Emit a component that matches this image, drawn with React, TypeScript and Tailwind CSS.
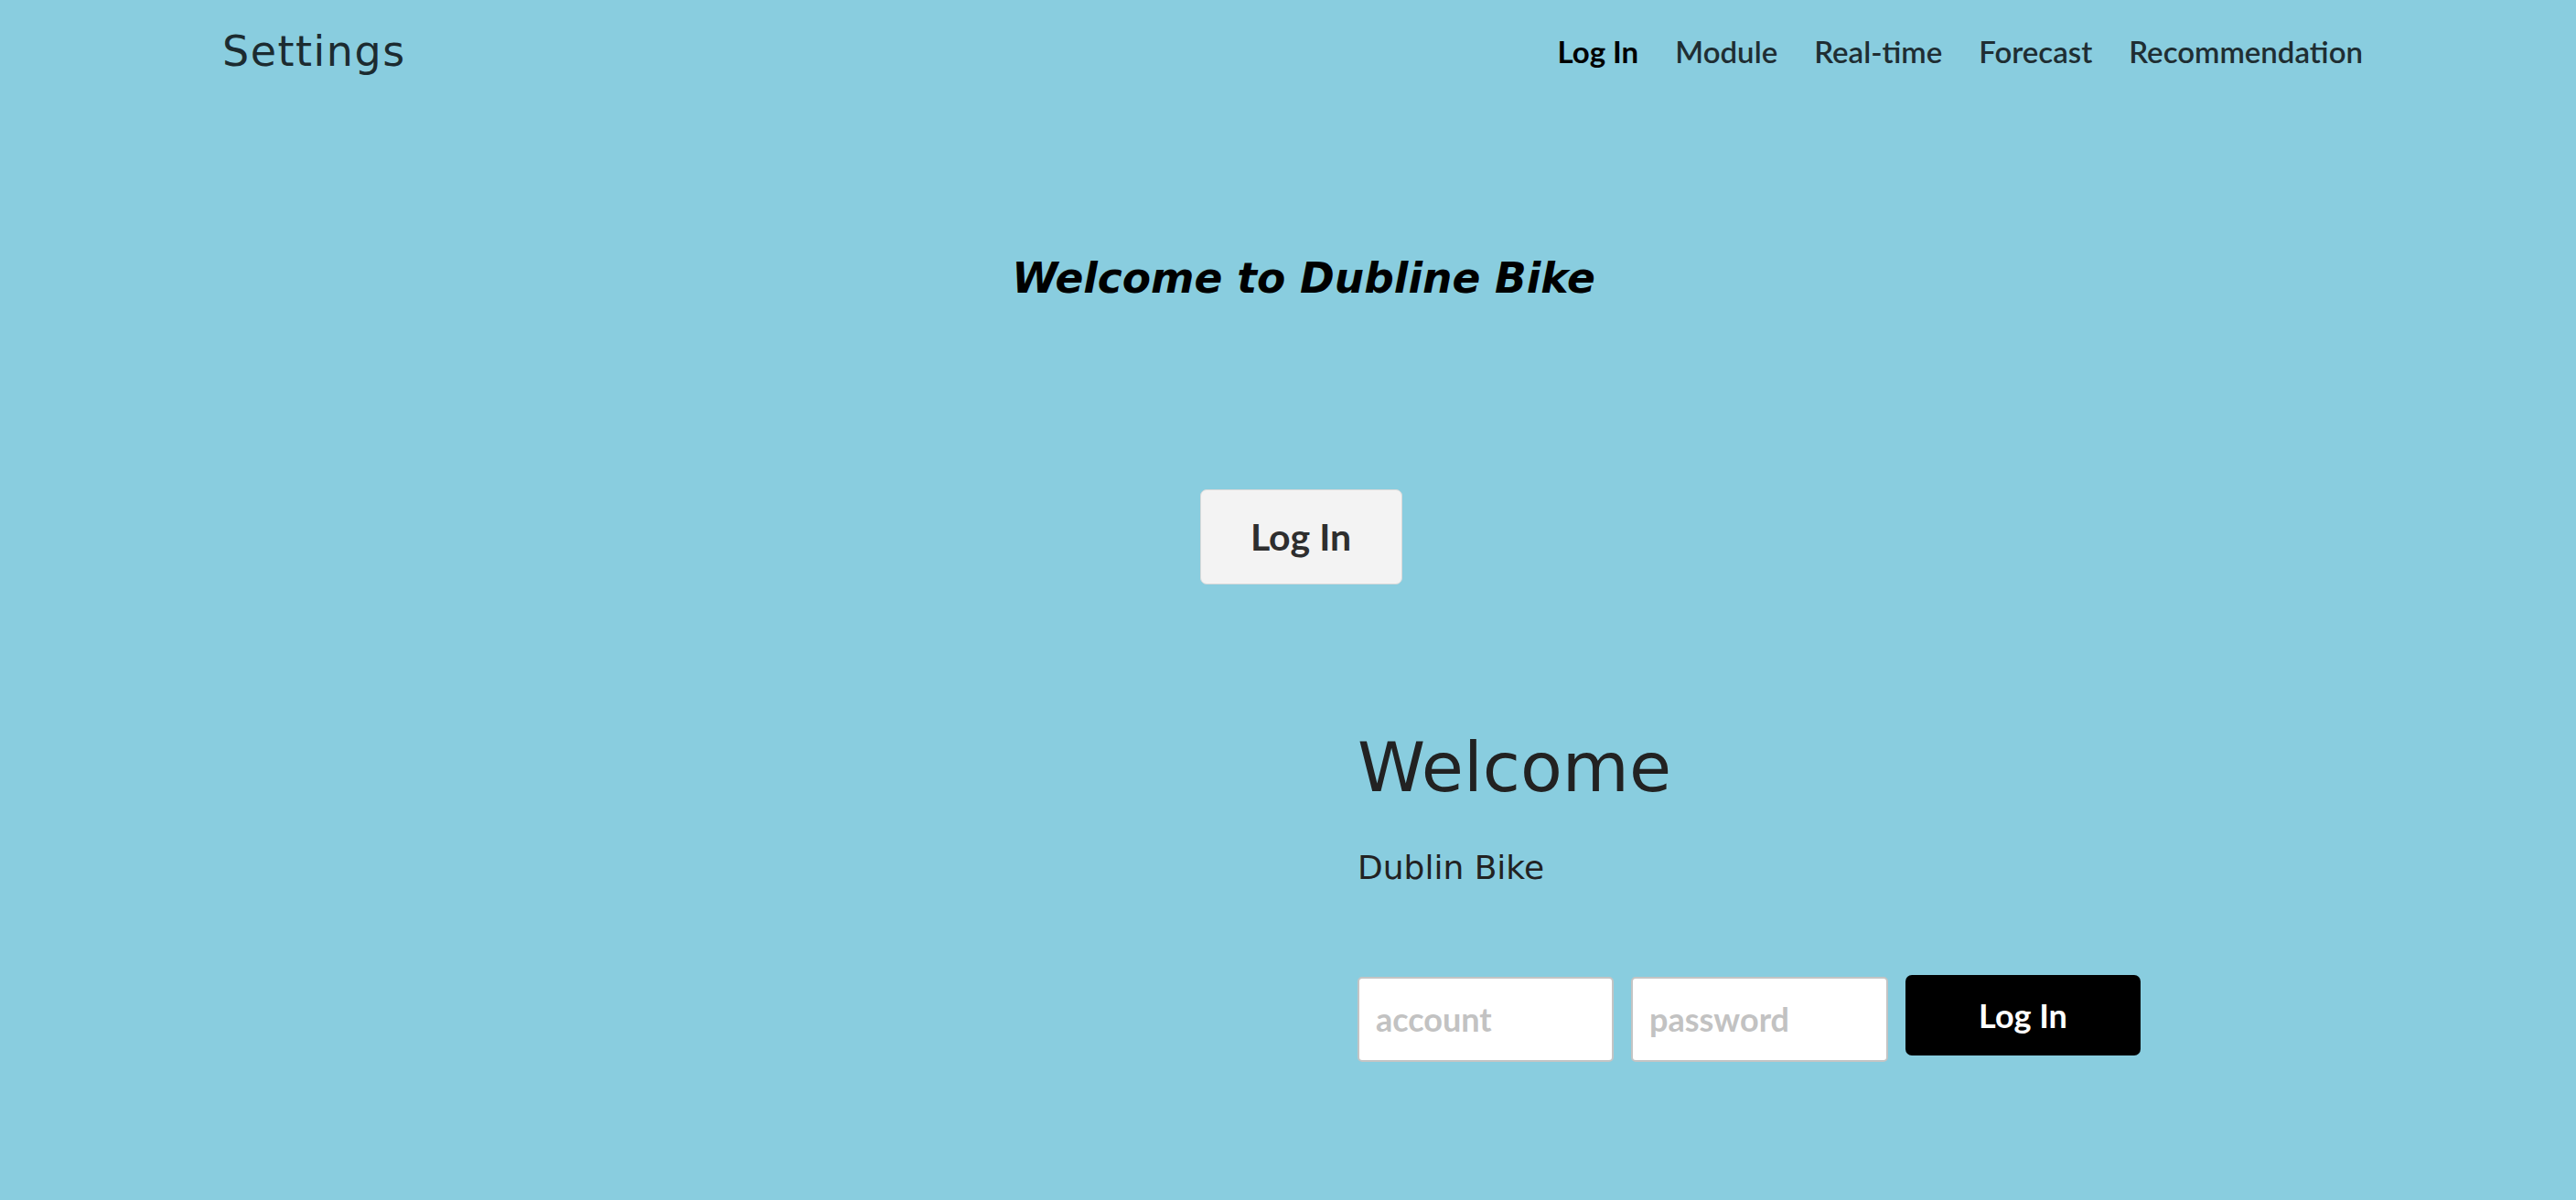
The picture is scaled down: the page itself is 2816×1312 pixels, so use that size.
import React from "react";

const navLinks = ["Log In", "Module", "Real-time", "Forecast", "Recommendation"];

const geo = { fontFamily: '"DejaVu Sans", "Open Sans", sans-serif' };
const futura = { fontFamily: 'Lato, "Open Sans", sans-serif' };

function TopNav() {
  return (
    <header className="flex h-[112px] items-center justify-between pl-[243px] pr-[233px]">
      <span className="text-[46px] leading-none tracking-[1.5px] text-[#1c2b30]" style={geo}>
        Settings
      </span>
      <nav className="flex items-center gap-[40px]" style={futura}>
        {navLinks.map((label, i) => (
          <a
            key={label}
            href="#"
            className={
              i === 0
                ? "text-[33px] font-bold leading-none text-black"
                : "text-[33px] font-semibold leading-none text-[#1f2e33]"
            }
          >
            {label}
          </a>
        ))}
      </nav>
    </header>
  );
}

export default function App() {
  return (
    <div className="min-h-[1312px] w-full bg-[#89cddf]">
      <TopNav />

      {/* Hero */}
      <section className="flex flex-col items-center pl-[34px]">
        <h1
          className="mt-[170px] text-[45.5px] font-bold italic leading-none text-black"
          style={geo}
        >
          Welcome to Dubline Bike
        </h1>
        <button
          className="mt-[207px] ml-[-6px] flex h-[104px] w-[221px] items-center justify-center rounded-[7px] border border-[#d9d9d9] bg-[#f3f3f3] text-[41px] font-bold text-[#2e2e2e]"
          style={futura}
        >
          Log In
        </button>
      </section>

      {/* Login form */}
      <section className="grid grid-cols-2">
        <div />
        <div className="pl-[76px]">
          <h2 className="mt-[163px] text-[75px] leading-none text-[#222]" style={geo}>
            Welcome
          </h2>
          <p className="mt-[54px] text-[36px] leading-none text-[#222]" style={geo}>
            Dublin Bike
          </p>
          <div className="mt-[101px] flex items-start gap-[19px]" style={futura}>
            <input
              placeholder="account"
              className="h-[93px] w-[280px] rounded-[5px] border-2 border-[#c4c4c4] bg-white px-[18px] text-[36px] font-bold text-[#333] placeholder:text-[#c2c2c2] outline-none"
            />
            <input
              placeholder="password"
              type="password"
              className="h-[93px] w-[281px] rounded-[5px] border-2 border-[#c4c4c4] bg-white px-[18px] text-[36px] font-bold text-[#333] placeholder:text-[#c2c2c2] outline-none"
            />
            <button className="-mt-[2px] h-[88px] w-[257px] rounded-[7px] bg-black text-[36px] font-bold text-white">
              Log In
            </button>
          </div>
        </div>
      </section>
    </div>
  );
}
